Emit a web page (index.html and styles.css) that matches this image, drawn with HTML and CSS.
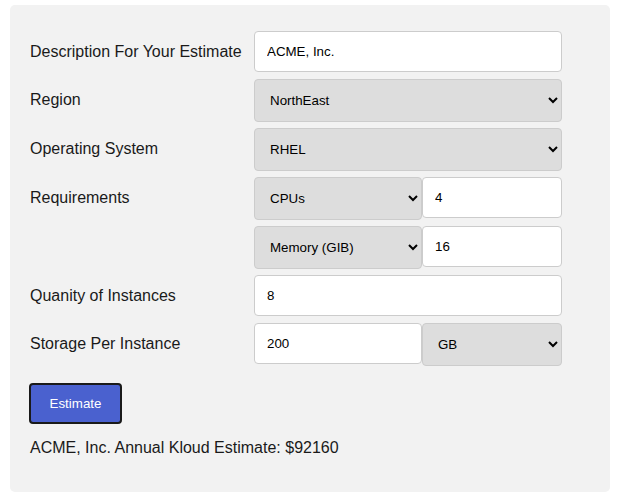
FILE: index.html
```html
<!DOCTYPE html>
<html>
<head>
<meta charset="utf-8">
<link rel="stylesheet" href="styles.css">
</head>
<body>
<div class="container">
  <form class="form">
    <div class="row">
      <label class="label">Description For Your Estimate</label>
      <input class="field full" type="text" value="ACME, Inc.">
    </div>
    <div class="row">
      <label class="label">Region</label>
      <select class="field sel full"><option>NorthEast</option></select>
    </div>
    <div class="row">
      <label class="label">Operating System</label>
      <select class="field sel full"><option>RHEL</option></select>
    </div>
    <div class="row">
      <label class="label">Requirements</label>
      <select class="field sel left"><option>CPUs</option></select>
      <input class="field right" type="text" value="4">
    </div>
    <div class="row">
      <span class="label"></span>
      <select class="field sel left"><option>Memory (GIB)</option></select>
      <input class="field right" type="text" value="16">
    </div>
    <div class="row">
      <label class="label">Quanity of Instances</label>
      <input class="field full" type="text" value="8">
    </div>
    <div class="row">
      <label class="label">Storage Per Instance</label>
      <input class="field left" type="text" value="200">
      <select class="field sel right"><option>GB</option></select>
    </div>
    <button type="button" class="btn">Estimate</button>
    <p class="result">ACME, Inc. Annual Kloud Estimate: $92160</p>
  </form>
</div>
</body>
</html>
```
FILE: styles.css
```css
html, body {
  margin: 0;
  padding: 0;
  background: #ffffff;
}
body {
  font-family: "Liberation Sans", Arial, sans-serif;
  color: #1a1a1a;
}
.container {
  margin: 5px 10px;
  width: 600px;
  height: 487px;
  box-sizing: border-box;
  background: #f2f2f2;
  border-radius: 5px;
  padding: 26px 20px 0 20px;
}
.form {
  display: flex;
  flex-direction: column;
  gap: 6px;
}
.row {
  display: flex;
  align-items: flex-start;
  min-height: 42px;
}
.label {
  width: 224px;
  flex: none;
  font-size: 16px;
  line-height: 18px;
  padding-top: 12px;
}
.field {
  box-sizing: border-box;
  font-family: "Liberation Sans", Arial, sans-serif;
  font-size: 13.333px;
  color: #000;
  border: 1px solid #cccccc;
  border-radius: 4px;
  padding: 12px;
  height: 41px;
  background: #ffffff;
  margin: 0;
}
.sel {
  height: 43px;
  background-color: #dddddd;
  padding: 12px 10px 12px 11px;
}
.full { width: 308px; }
.left { width: 168px; }
.right { width: 140px; }
.btn {
  align-self: flex-start;
  margin-top: 11px;
  width: 93px;
  height: 41px;
  margin-left: -1px;
  box-sizing: border-box;
  background: #4a61cf;
  color: #ffffff;
  border: 2px solid #1a1a1a;
  border-radius: 4px;
  font-family: "Liberation Sans", Arial, sans-serif;
  font-size: 13.333px;
  padding: 0;
}
.result {
  margin: 9px 0 0 0;
  font-size: 16px;
  line-height: 18px;
}
```
